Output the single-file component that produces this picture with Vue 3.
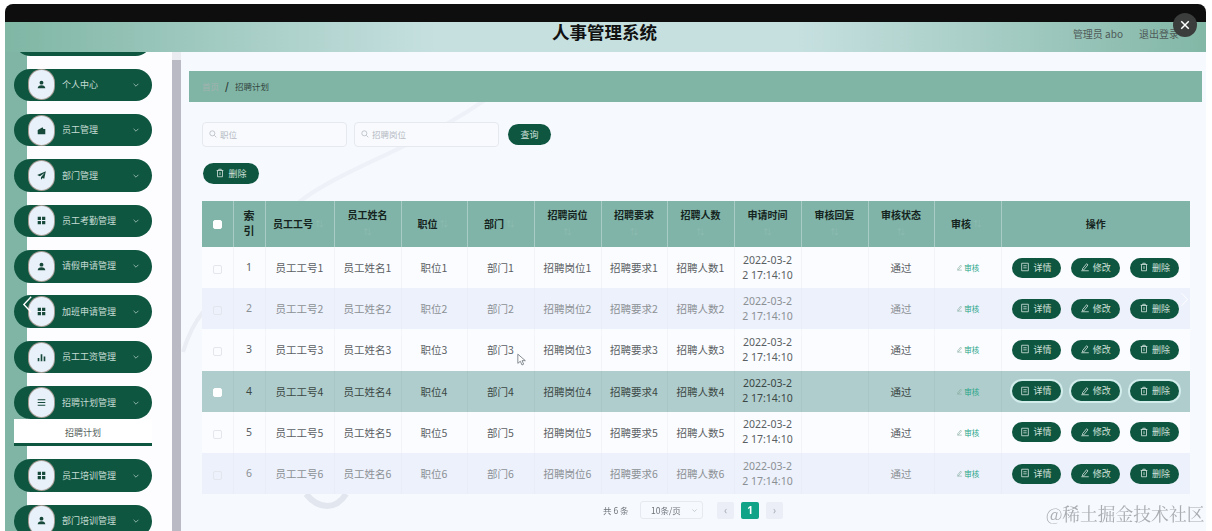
<script setup>
const icons = {
  user: 'M12 5a3.6 3.6 0 1 1 0 7.2A3.6 3.6 0 0 1 12 5zM5 19c0-3.4 3-5.4 7-5.4s7 2 7 5.4z',
  wallet: 'M5 11l9-5 1.5 3H19v10H5zM16 13h3v3h-3z',
  plane: 'M20 4L4 11l5 2.5L18 7l-7 8v5l3-3.5 3 1.5z',
  grid: 'M5 5h6v6H5zM13 5h6v6h-6zM5 13h6v6H5zM13 13h6v6h-6z',
  bars: 'M5 13h3v6H5zM10.5 6h3v13h-3zM16 10h3v9h-3z',
  list: 'M5 6h14v2H5zM5 11h14v2H5zM5 16h14v2H5z',
}

const menus = [
  { name: '个人中心', icon: 'user' },
  { name: '员工管理', icon: 'wallet' },
  { name: '部门管理', icon: 'plane' },
  { name: '员工考勤管理', icon: 'grid' },
  { name: '请假申请管理', icon: 'user' },
  { name: '加班申请管理', icon: 'grid' },
  { name: '员工工资管理', icon: 'bars' },
  { name: '招聘计划管理', icon: 'list', sub: '招聘计划' },
  { name: '员工培训管理', icon: 'grid' },
  { name: '部门培训管理', icon: 'user' },
]

const columns = ['员工工号', '员工姓名', '职位', '部门', '招聘岗位', '招聘要求', '招聘人数', '申请时间', '审核回复', '审核状态', '审核']
const widths = [31, 32, 69, 67, 66, 67, 67, 66, 67, 67, 67, 66, 67, 189]
const rows = [1, 2, 3, 4, 5, 6]
const actions = [
  { label: '详情', icon: 'doc' },
  { label: '修改', icon: 'edit' },
  { label: '删除', icon: 'trash' },
]
</script>

<template>
  <div class="frame">
    <div class="topbar"></div>
    <header class="head">
      <h1>人事管理系统</h1>
      <div class="account">
        <span>管理员 abo</span>
        <span>退出登录</span>
      </div>
    </header>

    <div class="body">
      <aside class="side">
        <div class="menu">
          <div class="pill cut"></div>
          <template v-for="m in menus" :key="m.name">
            <div class="pill" :class="{ open: m.sub }">
              <span class="ava">
                <svg viewBox="0 0 24 24" width="13" height="13"><path :d="icons[m.icon]" fill="#17493a" /></svg>
              </span>
              <span class="pill-name">{{ m.name }}</span>
              <svg class="chev" viewBox="0 0 10 10" width="8" height="8"><path d="M2 3.5l3 3 3-3" fill="none" stroke="#8fb5a8" stroke-width="1.2" /></svg>
            </div>
            <div v-if="m.sub" class="sub">{{ m.sub }}</div>
          </template>
        </div>
      </aside>
      <div class="scroll"><div class="thumb"></div></div>

      <main class="main">
        <svg class="deco" viewBox="0 0 1025 479" width="1025" height="479">
          <path d="M118 150C170 110 260 90 340 20" fill="none" stroke="#eef1f7" stroke-width="4" />
          <path d="M2 300C8 280 14 270 22 260" fill="none" stroke="#eaedf4" stroke-width="4" />
          <path d="M125 442C138 458 155 458 165 442" fill="none" stroke="#e2e6ee" stroke-width="6" />
        </svg>
        <div class="crumb"><span class="home">首页</span><b>/</b><span>招聘计划</span></div>

        <div class="search">
          <label class="field">
            <svg viewBox="0 0 12 12" width="8" height="8"><circle cx="5" cy="5" r="3.8" fill="none" stroke="#a9b0b8" /><path d="M8 8l3 3" stroke="#a9b0b8" /></svg>
            <span>职位</span>
          </label>
          <label class="field">
            <svg viewBox="0 0 12 12" width="8" height="8"><circle cx="5" cy="5" r="3.8" fill="none" stroke="#a9b0b8" /><path d="M8 8l3 3" stroke="#a9b0b8" /></svg>
            <span>招聘岗位</span>
          </label>
          <button class="btn query">查询</button>
        </div>

        <div class="tools">
          <button class="btn del">
            <svg viewBox="0 0 12 12" width="10" height="10"><path d="M2 3h8M4.500 3V1.500h3V3M3 3v7.500h6V3M6 5v3.500" fill="none" stroke="#cfe0da" /></svg>
            删除
          </button>
        </div>

        <table class="grid">
          <colgroup>
            <col v-for="(w, i) in widths" :key="i" :style="{ width: w + 'px' }">
          </colgroup>
          <thead>
            <tr>
              <th><i class="check on"></i></th>
              <th class="narrow">索引</th>
              <th v-for="c in columns" :key="c">
                <span class="th-in"><span>{{ c }}</span><em>⇅</em></span>
              </th>
              <th>操作</th>
            </tr>
          </thead>
          <tbody>
            <tr v-for="n in rows" :key="n" :class="{ even: n % 2 === 0, hover: n === 4 }">
              <td><i class="check" :class="{ on: n === 4 }"></i></td>
              <td class="num">{{ n }}</td>
              <td>员工工号{{ n }}</td>
              <td>员工姓名{{ n }}</td>
              <td>职位{{ n }}</td>
              <td>部门{{ n }}</td>
              <td>招聘岗位{{ n }}</td>
              <td>招聘要求{{ n }}</td>
              <td>招聘人数{{ n }}</td>
              <td class="time">2022-03-22 17:14:10</td>
              <td></td>
              <td>通过</td>
              <td class="audit">
                <svg viewBox="0 0 12 12" width="7" height="7"><path d="M2 10.500h8M3 8l5-6 1.500 1.500-5 6H3z" fill="none" stroke="#7fa99b" /></svg>
                审核
              </td>
              <td>
                <div class="ops">
                  <button v-for="a in actions" :key="a.label" class="btn op">
                    <svg viewBox="0 0 12 12" width="10" height="10">
                      <path v-if="a.icon === 'doc'" d="M2 1.500h8v9H2zM4 4.500h4M4 7h4" fill="none" stroke="#cfe0da" />
                      <path v-else-if="a.icon === 'edit'" d="M1.500 10.500h9M3 8l5-6 1.500 1.500-5 6H3z" fill="none" stroke="#cfe0da" />
                      <path v-else d="M2 3h8M4.500 3V1.500h3V3M3 3v7.500h6V3M6 5v3.500" fill="none" stroke="#cfe0da" />
                    </svg>
                    {{ a.label }}
                  </button>
                </div>
              </td>
            </tr>
          </tbody>
        </table>

        <div class="pager">
          <span class="total">共 6 条</span>
          <span class="size">10条/页<svg viewBox="0 0 10 10" width="7" height="7"><path d="M2 3.500l3 3 3-3" fill="none" stroke="#b5bac2" /></svg></span>
          <span class="page off">‹</span>
          <span class="page cur">1</span>
          <span class="page off">›</span>
        </div>
      </main>
    </div>

    <svg class="arrow left" viewBox="0 0 12 20" width="11" height="19"><path d="M10 1.500L2 10l8 8.500" fill="none" stroke="#fff" stroke-width="1.500" /></svg>
    <svg class="arrow right" viewBox="0 0 12 20" width="9" height="19"><path d="M2 1.500l8 8.500-8 8.500" fill="none" stroke="#fff" stroke-width="1.200" /></svg>
    <svg class="cursor" viewBox="0 0 12 16" width="10" height="14"><path d="M1 1v11l3-2.500 2 4.500 2-1-2-4.200h4z" fill="#fff" stroke="#6e7780" /></svg>
  </div>

  <button class="close">
    <svg viewBox="0 0 12 12" width="10" height="10"><path d="M1.500 1.500l9 9M10.500 1.500l-9 9" stroke="#fff" stroke-width="1.800" /></svg>
  </button>
  <div class="mark">@稀土掘金技术社区</div>
</template>

<style scoped>
.frame {
  position: relative;
  display: flex;
  flex-direction: column;
  height: 527px;
  margin: 4px 6px 0 5px;
  overflow: hidden;
  border-radius: 8px 8px 0 0;
  background: #f6f9fe;
  font-family: "Noto Sans CJK SC", "Noto Sans", sans-serif;
  filter: blur(0.55px);
}

.topbar {
  flex: none;
  height: 18px;
  background: #0e0e0e;
}

.head {
  flex: none;
  position: relative;
  display: flex;
  align-items: center;
  justify-content: flex-end;
  height: 30px;
  background: linear-gradient(90deg, #7fb6a4, #c6e0e0 36%, #c6e0e0 66%, #82b7a6);
}

.head h1 {
  position: absolute;
  left: 547px;
  top: -1px;
  margin: 0;
  font-size: 17.5px;
  line-height: 22px;
  font-weight: 700;
  color: #111;
}

.account {
  display: flex;
  gap: 16px;
  margin: 0 27px 8px 0;
  font-size: 10px;
  color: #4f5a58;
  white-space: nowrap;
}

.body {
  flex: 1;
  display: flex;
  min-height: 0;
}

.side {
  flex: none;
  width: 167px;
  overflow: hidden;
  padding-left: 9px;
  box-sizing: border-box;
  background: linear-gradient(90deg, #80b5a5 22px, #fdfdff 22px);
}

.menu {
  width: 138px;
  margin-top: -28.9px;
}

.pill {
  display: flex;
  align-items: center;
  height: 32.6px;
  margin-bottom: 12.8px;
  padding: 0 12px 0 15px;
  box-sizing: border-box;
  border-radius: 17px;
  background: #0f5640;
  color: #c5dcd3;
  font-size: 9px;
}

.pill.open {
  margin-bottom: 0.4px;
}

.ava {
  display: flex;
  align-items: center;
  justify-content: center;
  flex: none;
  width: 25px;
  height: 29px;
  border-radius: 12.5px;
  background: #e8f0fa;
  box-shadow: 0 0 0 1px #a59a92;
}

.pill-name {
  flex: 1;
  margin: 0 0 1px 8px;
  white-space: nowrap;
}

.chev {
  flex: none;
}

.sub {
  height: 24px;
  margin-bottom: 13px;
  border-bottom: 3px solid #0f5640;
  background: #fff;
  font-size: 9px;
  line-height: 27px;
  text-align: center;
  color: #55605c;
}

.scroll {
  flex: none;
  width: 9px;
  padding-top: 8px;
  box-sizing: border-box;
  background: #e9ebf0;
}

.thumb {
  height: 100%;
  background: #b9bac3;
}

.main {
  flex: 1;
  position: relative;
  min-width: 0;
  background: #f6f9fe;
}

.deco {
  position: absolute;
  left: 0;
  top: 0;
}

.crumb {
  position: relative;
  display: flex;
  align-items: center;
  gap: 6px;
  height: 31px;
  margin: 19px 4px 0 8px;
  padding: 0 0 2px 13px;
  box-sizing: border-box;
  background: #80b5a6;
  font-size: 8.500px;
  color: #33463f;
}

.crumb .home {
  color: #a3b3ae;
}

.crumb b {
  color: #2e3a36;
  font-size: 10px;
}

.search {
  position: relative;
  display: flex;
  align-items: center;
  gap: 7px;
  margin: 20px 0 0 21px;
}

.field {
  display: flex;
  align-items: center;
  gap: 3px;
  width: 145px;
  height: 25px;
  padding: 0 0 2px 6px;
  box-sizing: border-box;
  border: 1px solid #e6e9ef;
  border-radius: 4px;
  background: #f8fafe;
  font-size: 8.500px;
  color: #b5bac2;
}

.btn {
  display: inline-flex;
  align-items: center;
  justify-content: center;
  gap: 3px;
  padding: 0 0 1px;
  border: 0;
  border-radius: 11px;
  background: #0f5640;
  color: #cfe0da;
  font-family: inherit;
  font-size: 9px;
  white-space: nowrap;
}

.query {
  width: 43px;
  height: 21px;
  margin-left: 2px;
}

.tools {
  position: relative;
  display: flex;
  margin: 16px 0 0 22px;
}

.del {
  width: 56px;
  height: 21px;
}

.grid {
  position: relative;
  width: 988px;
  margin: 17px 0 0 21px;
  table-layout: fixed;
  border-collapse: collapse;
}

.grid th {
  height: 46px;
  padding: 0 7px 2px;
  box-sizing: border-box;
  border-left: 1px solid #a9cdc5;
  background: #80b4a8;
  font-size: 10px;
  line-height: 17px;
  font-weight: 700;
  color: #152420;
}

.grid th:first-child,
.grid td:first-child {
  border-left: 0;
}

.th-in {
  display: flex;
  flex-wrap: wrap;
  align-items: center;
  justify-content: center;
}

.th-in em {
  width: 13px;
  font-style: normal;
  font-weight: 400;
  font-size: 8px;
  text-align: center;
  color: #8fbdb2;
}

.grid th.narrow {
  padding: 0 10px 2px;
  font-size: 11px;
  line-height: 15px;
}

.grid td {
  height: 41.2px;
  padding: 0 8px;
  box-sizing: border-box;
  border-left: 1px solid #f2f4f9;
  background: #fbfcff;
  font-size: 10.500px;
  line-height: 15px;
  text-align: center;
  color: #5a5f63;
  white-space: nowrap;
}

.grid .even td {
  border-left-color: #e9edf7;
  background: #edf1fb;
  color: #8b9095;
}

.grid .hover td {
  border-left-color: #a8c6c5;
  background: #b0cdcd;
  color: #3a4744;
}

.grid td.time {
  padding: 0 7px;
  font-family: "Noto Sans", sans-serif;
  font-size: 10.500px;
  line-height: 15px;
  word-break: break-all;
  white-space: normal;
}

.grid td.num {
  font-family: "Noto Sans", sans-serif;
}

.grid td.audit {
  font-size: 7.500px;
  color: #25a688;
}

.check {
  display: inline-block;
  width: 9px;
  height: 9px;
  box-sizing: border-box;
  border: 1px solid #e3e6ec;
  border-radius: 2px;
  vertical-align: middle;
}

.check.on {
  border-color: #fff;
  background: #fff;
}

.ops {
  display: flex;
  justify-content: space-between;
  padding: 0 3px 0 2px;
}

.op {
  width: 49px;
  height: 20px;
}

.hover .op {
  box-shadow: 0 0 0 2px #d3ecec;
}

.pager {
  position: relative;
  display: flex;
  align-items: center;
  height: 18px;
  margin: 7px 0 0 422px;
  font-size: 8.500px;
  color: #6d747a;
}

.total {
  width: 37px;
}

.size {
  display: flex;
  align-items: center;
  justify-content: space-between;
  width: 63px;
  height: 18px;
  margin-right: 14px;
  padding: 0 4px 0 10px;
  box-sizing: border-box;
  border: 1px solid #e6e9ef;
  border-radius: 3px;
}

.page {
  display: flex;
  align-items: center;
  justify-content: center;
  width: 17px;
  height: 17px;
  margin-right: 7px;
  border-radius: 2px;
  font-family: "Noto Sans", sans-serif;
  font-size: 10px;
}

.page.off {
  background: #ebeef6;
  color: #aab0b8;
}

.page.cur {
  width: 18px;
  background: #10a387;
  color: #fff;
  font-weight: 700;
}

.arrow {
  position: absolute;
  z-index: 2;
}

.arrow.left {
  left: 17px;
  top: 291px;
}

.arrow.right {
  left: 1175px;
  top: 286px;
}

.cursor {
  position: absolute;
  left: 512px;
  top: 349px;
}

.close {
  position: absolute;
  left: 1173px;
  top: 13px;
  display: flex;
  align-items: center;
  justify-content: center;
  width: 24px;
  height: 24px;
  padding: 0;
  border: 0;
  border-radius: 50%;
  background: #3a3d3c;
}

.mark {
  position: absolute;
  left: 1046px;
  top: 503px;
  font-family: "Noto Serif CJK SC", "Noto Sans CJK SC", serif;
  font-size: 17.800px;
  line-height: 22px;
  color: #a9adb2;
  white-space: nowrap;
}
</style>

<style>
html,
body {
  height: 531px;
  overflow: hidden;
  background: #fff;
}
</style>
